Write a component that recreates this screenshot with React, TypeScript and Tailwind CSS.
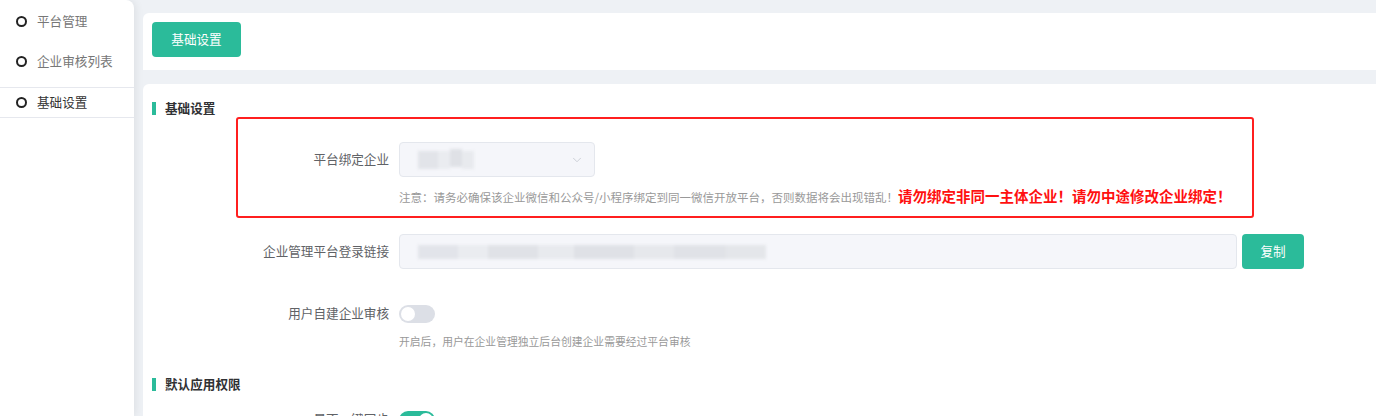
import { ChevronDown } from "lucide-react";

const teal = "bg-[#2bbb9a]";

const SideItem = ({ label, active }: { label: string; active?: boolean }) => (
  <div className="flex items-center h-full pl-[16px] gap-[10px]">
    <span className="w-[11px] h-[11px] rounded-full border-2 border-[#222] shrink-0" />
    <span className={`text-[12.6px] leading-none ${active ? "text-[#333]" : "text-[#777]"}`}>{label}</span>
  </div>
);

const Toggle = ({ on }: { on?: boolean }) => (
  <div
    className={`w-[36px] h-[18px] rounded-full flex items-center px-[2px] ${
      on ? "bg-[#2bbb9a] justify-end" : "bg-[#dcdfe6] justify-start"
    }`}
  >
    <span className="w-[14px] h-[14px] rounded-full bg-white" />
  </div>
);

const SectionTitle = ({ title }: { title: string }) => (
  <div className="flex items-center h-[20px] pl-[9px]">
    <span className="w-[4px] h-[13px] bg-[#2bbb9a]" />
    <span className="ml-[9px] text-[12.6px] font-semibold text-[#303133] leading-none">{title}</span>
  </div>
);

const Label = ({ text }: { text: string }) => (
  <div className="w-[246px] shrink-0 text-right text-[12.6px] text-[#606266] leading-none">{text}</div>
);

export default function App() {
  return (
    <div className="w-[1376px] h-[416px] overflow-hidden bg-[#eef1f5] flex font-['Noto_Sans_CJK_SC','Noto_Sans',sans-serif]">
      {/* Sidebar */}
      <aside className="w-[134px] shrink-0 bg-white rounded-tr-lg shadow-[2px_0_8px_rgba(0,0,0,0.07)] pt-[1px] z-10">
        <div className="h-[40px]">
          <SideItem label="平台管理" />
        </div>
        <div className="h-[40px]">
          <SideItem label="企业审核列表" />
        </div>
        <div className="mt-[6px] h-[31px] border-y border-[#e6e8ee]">
          <SideItem label="基础设置" active />
        </div>
      </aside>

      {/* Main */}
      <main className="flex-1 min-w-0 pl-[9px] pt-[13px]">
        <div className="h-[57px] bg-white rounded-tl-md pl-[9px] pt-[9px]">
          <button className={`${teal} w-[89px] h-[35px] rounded-[4px] text-white text-[12.6px] leading-none`}>
            基础设置
          </button>
        </div>

        <div className="relative mt-[14px] bg-white rounded-tl-md pt-[14px] h-[400px]">
          {/* highlight annotation */}
          <div className="absolute left-[93px] top-[33px] w-[1018px] h-[101px] border-2 border-[#ff1f1f] rounded-[3px]" />

          <SectionTitle title="基础设置" />

          {/* Row 1 */}
          <div className="mt-[24px] flex items-center">
            <Label text="平台绑定企业" />
            <div className="ml-[10px] w-[196px] h-[35px] rounded-[4px] bg-[#f5f6fa] border border-[#e4e7ed] flex items-center justify-between pl-[18px] pr-[10px]">
              <div className="flex blur-[1.5px]">
                <span className="w-[20px] h-[18px] bg-[#e2e4e9]" />
                <span className="w-[12px] h-[18px] bg-[#eaecf0]" />
                <span className="w-[12px] h-[18px] bg-[#dfe1e6] -mt-[2px]" />
                <span className="w-[12px] h-[18px] bg-[#e8eaee]" />
              </div>
              <ChevronDown size={14} strokeWidth={1.3} className="text-[#c0c4cc]" />
            </div>
          </div>
          <div className="mt-[10px] ml-[256px] text-[11.5px] leading-[18px] text-[#999] whitespace-nowrap">
            注意：请务必确保该企业微信和公众号/小程序绑定到同一微信开放平台，否则数据将会出现错乱！
            <span className="text-[14.5px] font-bold text-[#ff1010]">请勿绑定非同一主体企业！请勿中途修改企业绑定！</span>
          </div>

          {/* Row 2 */}
          <div className="mt-[28px] flex items-center">
            <Label text="企业管理平台登录链接" />
            <div className="ml-[10px] w-[838px] h-[35px] rounded-[4px] bg-[#f5f6fa] border border-[#e4e7ed] flex items-center pl-[18px]">
              <div className="flex blur-[1.5px]">
                <span className="w-[40px] h-[14px] bg-[#e2e4ea]" />
                <span className="w-[30px] h-[14px] bg-[#eaecf0]" />
                <span className="w-[50px] h-[14px] bg-[#e0e2e7]" />
                <span className="w-[36px] h-[14px] bg-[#e8eaee]" />
                <span className="w-[60px] h-[14px] bg-[#dfe1e6]" />
                <span className="w-[40px] h-[14px] bg-[#e6e8ec]" />
                <span className="w-[52px] h-[14px] bg-[#e0e2e7]" />
                <span className="w-[40px] h-[14px] bg-[#e4e6ea]" />
              </div>
            </div>
            <button className={`${teal} ml-[5px] w-[62px] h-[35px] rounded-[4px] text-white text-[12.6px] leading-none`}>
              复制
            </button>
          </div>

          {/* Row 3 */}
          <div className="mt-[27px] h-[35px] flex items-center">
            <Label text="用户自建企业审核" />
            <div className="ml-[10px]">
              <Toggle />
            </div>
          </div>
          <div className="mt-[2px] ml-[256px] text-[10.8px] leading-[16px] text-[#999]">
            开启后，用户在企业管理独立后台创建企业需要经过平台审核
          </div>

          <div className="mt-[25px]">
            <SectionTitle title="默认应用权限" />
          </div>

          <div className="mt-[8px] h-[35px] flex items-center">
            <Label text="是否一键同步" />
            <div className="ml-[10px]">
              <Toggle on />
            </div>
          </div>
        </div>
      </main>
    </div>
  );
}
